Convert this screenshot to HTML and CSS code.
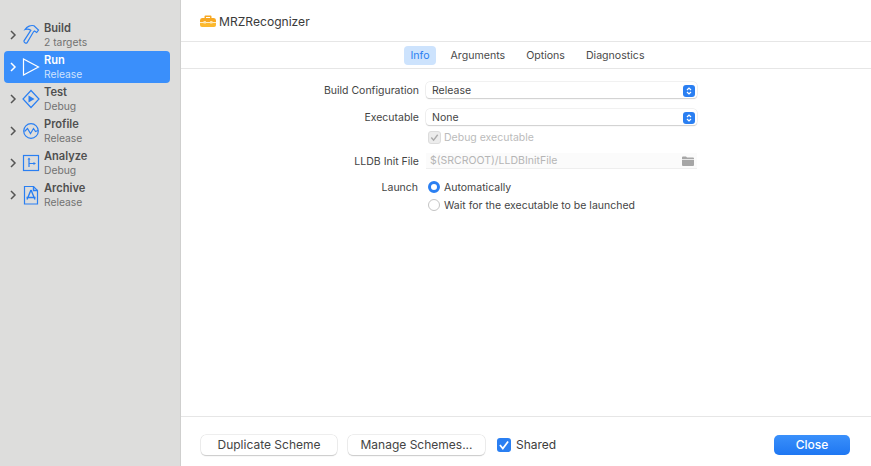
FILE: index.html
```html
<!DOCTYPE html>
<html lang="en">
<head>
<meta charset="utf-8">
<title>MRZRecognizer scheme</title>
<link rel="stylesheet" href="styles.css">
</head>
<body>
<div class="window">
  <aside class="sidebar">
    <div class="action">
      <svg class="chev" viewBox="0 0 8 10"><path d="M2 1l4 4-4 4"/></svg>
      <svg class="icon" viewBox="0 0 18 22"><path d="M3 5.500C5 2.500 9 .8 12 1.800L16.500 6l-1.800 2.500L12.500 7l-1 .8L5 18.800c-1 1-3.500-.5-3-2L8.800 6.300C7 5 5 4.800 3 5.500z"/></svg>
      <div class="txt"><b>Build</b><span>2 targets</span></div>
    </div>
    <div class="action selected">
      <svg class="chev" viewBox="0 0 8 10"><path d="M2 1l4 4-4 4"/></svg>
      <svg class="icon" viewBox="0 0 18 22"><path d="M1.500 3v16L16.500 11z"/></svg>
      <div class="txt"><b>Run</b><span>Release</span></div>
    </div>
    <div class="action">
      <svg class="chev" viewBox="0 0 8 10"><path d="M2 1l4 4-4 4"/></svg>
      <svg class="icon" viewBox="0 0 18 22"><path d="M9 2.500l8 8.500-8 8.500L1 11z"/><path class="fill" d="M6.500 7.500v7l6-3.500z"/></svg>
      <div class="txt"><b>Test</b><span>Debug</span></div>
    </div>
    <div class="action">
      <svg class="chev" viewBox="0 0 8 10"><path d="M2 1l4 4-4 4"/></svg>
      <svg class="icon" viewBox="0 0 18 22"><circle cx="9" cy="11" r="7.300"/><path d="M2.500 11.500L5.500 8.500l3 5 3-5 2 3 2.500-1"/></svg>
      <div class="txt"><b>Profile</b><span>Release</span></div>
    </div>
    <div class="action">
      <svg class="chev" viewBox="0 0 8 10"><path d="M2 1l4 4-4 4"/></svg>
      <svg class="icon" viewBox="0 0 18 22"><rect x="1.500" y="3.500" width="15" height="15"/><path d="M7 7v8M7 11.500h5"/><path class="fill" d="M5.500 7.500h3L7 5.500zM11.500 10v3l2.500-1.500z"/></svg>
      <div class="txt"><b>Analyze</b><span>Debug</span></div>
    </div>
    <div class="action">
      <svg class="chev" viewBox="0 0 8 10"><path d="M2 1l4 4-4 4"/></svg>
      <svg class="icon" viewBox="0 0 18 22"><path d="M2.500 2.500h9l4 4v13.500h-13z"/><path d="M11.500 2.500v4h4M9 6l-4 9.500M9 6l4 9.500M4.500 13.500h9" class="heavy"/></svg>
      <div class="txt"><b>Archive</b><span>Release</span></div>
    </div>
  </aside>

  <main class="main">
    <header class="title">
      <svg class="toolbox" viewBox="0 0 16 12"><path class="tb1" d="M4.500 3V1.500Q4.500.5 5.500.5h5q1 0 1 1V3h2.500Q16 3 16 5.500V7H0V5.500Q0 3 2 3zM6 3h4V2H6z"/><path class="tb2" d="M0 7.800h16V10Q16 12 14 12H2Q0 12 0 10z"/><rect class="tb3" x="3.500" y="6" width="2.500" height="2.500" rx=".5"/><rect class="tb3" x="10" y="6" width="2.500" height="2.500" rx=".5"/></svg>
      <span>MRZRecognizer</span>
    </header>
    <nav class="tabs">
      <span class="tab active">Info</span>
      <span class="tab">Arguments</span>
      <span class="tab">Options</span>
      <span class="tab">Diagnostics</span>
    </nav>
    <section class="form">
      <label class="lab r1">Build Configuration</label>
      <div class="select r1">Release<i class="stepper"><svg viewBox="0 0 8 10"><path d="M2 4l2-2 2 2M2 6l2 2 2-2"/></svg></i></div>
      <label class="lab r2">Executable</label>
      <div class="select r2">None<i class="stepper"><svg viewBox="0 0 8 10"><path d="M2 4l2-2 2 2M2 6l2 2 2-2"/></svg></i></div>
      <div class="check-row ctl r3"><i class="cb disabled"><svg viewBox="0 0 12 12"><path d="M2.500 6l2.500 3 4.500-6"/></svg></i><span>Debug executable</span></div>
      <label class="lab r4">LLDB Init File</label>
      <div class="field ctl r4"><span>$(SRCROOT)/LLDBInitFile</span>
        <svg class="folder" viewBox="0 0 12 10"><path d="M0 1.500A1 1 0 0 1 1 .5h3l1 1h6a1 1 0 0 1 1 1V3H0z"/><path d="M0 3.800h12V9a1 1 0 0 1-1 1H1a1 1 0 0 1-1-1z"/></svg>
      </div>
      <label class="lab r5">Launch</label>
      <div class="radio-row ctl r5"><i class="radio on"></i><span>Automatically</span></div>
      <div class="radio-row ctl r6"><i class="radio"></i><span>Wait for the executable to be launched</span></div>
    </section>
    <footer class="footer">
      <button class="btn dup">Duplicate Scheme</button>
      <button class="btn mgr">Manage Schemes...</button>
      <div class="shared"><i class="cb on"><svg viewBox="0 0 12 12"><path d="M2.500 6l2.500 3 4.500-6"/></svg></i><span>Shared</span></div>
      <button class="btn close">Close</button>
    </footer>
  </main>
</div>
</body>
</html>
```
FILE: styles.css
```css
* { box-sizing: border-box; }
html, body { margin: 0; height: 100%; }
body { font-family: Inter, "Liberation Sans", sans-serif; font-size: 10.500px; color: #3c3c3c; background: #fff; overflow: hidden; }
i { display: block; font-style: normal; }
.window { display: flex; width: 871px; height: 466px; }

.sidebar { width: 181px; flex: none; background: #dddddc; border-right: 1px solid #cfcfce; padding: 19px 10px 0 4px; }
.action { display: flex; align-items: center; height: 32px; border-radius: 4px; width: 166px; }
.action.selected { background: #3a8ffb; color: #fff; }
.chev { width: 8px; height: 10px; margin-left: 5px; flex: none; fill: none; stroke: #555; stroke-width: 1.500; }
.selected .chev { stroke: #fff; }
.icon { width: 18px; height: 22px; margin-left: 5px; flex: none; fill: none; stroke: #2a7ff2; stroke-width: 1.200; }
.icon .fill { fill: #2a7ff2; stroke: none; }
.icon .heavy { stroke-width: 1.400; }
.selected .icon { stroke: #fff; }
.txt { margin-left: 4px; display: flex; flex-direction: column; line-height: 14px; }
.txt b { font-weight: 600; font-size: 11.100px; color: #4f4f4f; }
.txt span { font-size: 10.300px; color: #727272; }
.selected .txt b { color: #fff; }
.selected .txt span { color: #cfe2fd; }

.main { flex: 1; min-width: 0; display: flex; flex-direction: column; }
.title { height: 42px; border-bottom: 1px solid #e6e6e6; display: flex; align-items: center; padding: 1px 0 0 19px; font-size: 12.100px; color: #3a3a3a; }
.toolbox { width: 16px; height: 12px; margin-right: 3px; }
.tb1 { fill: #f7a823; fill-rule: evenodd; }
.tb2 { fill: #fcb92e; }
.tb3 { fill: #fde6b0; }
.tabs { height: 27px; border-bottom: 1px solid #e6e6e6; display: flex; justify-content: center; align-items: center; gap: 8px; padding-left: 3px; font-size: 10.600px; }
.tab { padding: 0 6.500px; height: 19px; line-height: 19px; border-radius: 4px; color: #4a4a4a; }
.tab.active { background: #cde3fd; color: #2a7ff2; }

.form { flex: 1; display: grid; grid-template-columns: 238px 271px; grid-template-rows: 27px 20px 24px 26px 18px 16px; column-gap: 7px; align-content: start; align-items: start; padding-top: 13px; }
.lab { grid-column: 1; text-align: right; line-height: 18px; color: #444; }
.select, .ctl { grid-column: 2; }
.r1 { grid-row: 1; }
.r2 { grid-row: 2; }
.r3 { grid-row: 3; }
.r4 { grid-row: 4; }
.r5 { grid-row: 5; }
.r6 { grid-row: 6; }
.lab.r5 { padding-right: 1px; }
.select { height: 16px; border-radius: 4px; background: #fff; box-shadow: 0 0 0 .5px #e3e3e3, 0 1px 1px #bdbdbd; padding: 1px 2px 0 6px; display: flex; align-items: center; justify-content: space-between; color: #444; line-height: 15px; }
.stepper { width: 12px; height: 12px; background: #2a7ff2; border-radius: 3px; display: flex; align-items: center; justify-content: center; }
.stepper svg { width: 8px; height: 10px; fill: none; stroke: #fff; stroke-width: 1.200; }
.check-row { display: flex; align-items: center; gap: 3px; color: #bbb; height: 16px; padding-left: 2px; }
.cb { width: 13px; height: 13px; border-radius: 3px; }
.cb svg { display: block; fill: none; stroke-width: 1.500; }
.cb.disabled { background: #ececec; border: 1px solid #dcdcdc; }
.cb.disabled svg { stroke: #aaa; width: 11px; height: 11px; }
.cb.on { background: #2a7ff2; width: 14px; height: 14px; }
.cb.on svg { stroke: #fff; width: 14px; height: 14px; }
.field { height: 16px; background: #fbfbfb; border-bottom: 1px solid #eee; display: flex; align-items: center; justify-content: space-between; padding: 0 3px 0 4px; color: #b5b5b5; }
.folder { width: 12px; height: 10px; fill: #a6a6a6; }
.radio-row { display: flex; align-items: center; gap: 4px; padding-left: 2px; height: 16px; color: #444; }
.radio { width: 12px; height: 12px; border-radius: 50%; border: 1px solid #c4c4c4; background: #fff; }
.radio.on { background: #fff; border: 3.500px solid #2a7ff2; }

.footer { height: 50px; border-top: 1px solid #e6e6e6; display: flex; align-items: center; padding: 6px 21px 0 20px; }
.btn { font: inherit; font-size: 12px; height: 20px; border: 0; border-radius: 5px; background: #fff; color: #444; box-shadow: 0 0 0 .5px #dedede, 0 1px 1px #bbb; padding: 0; }
.dup { width: 136px; }
.mgr { width: 137px; margin-left: 11px; }
.shared { display: flex; align-items: center; gap: 5px; margin-left: 12px; font-size: 12px; }
.close { margin-left: auto; width: 76px; background: linear-gradient(#3a90fb, #1f77f2); color: #fff; font-weight: 500; box-shadow: none; }
```
